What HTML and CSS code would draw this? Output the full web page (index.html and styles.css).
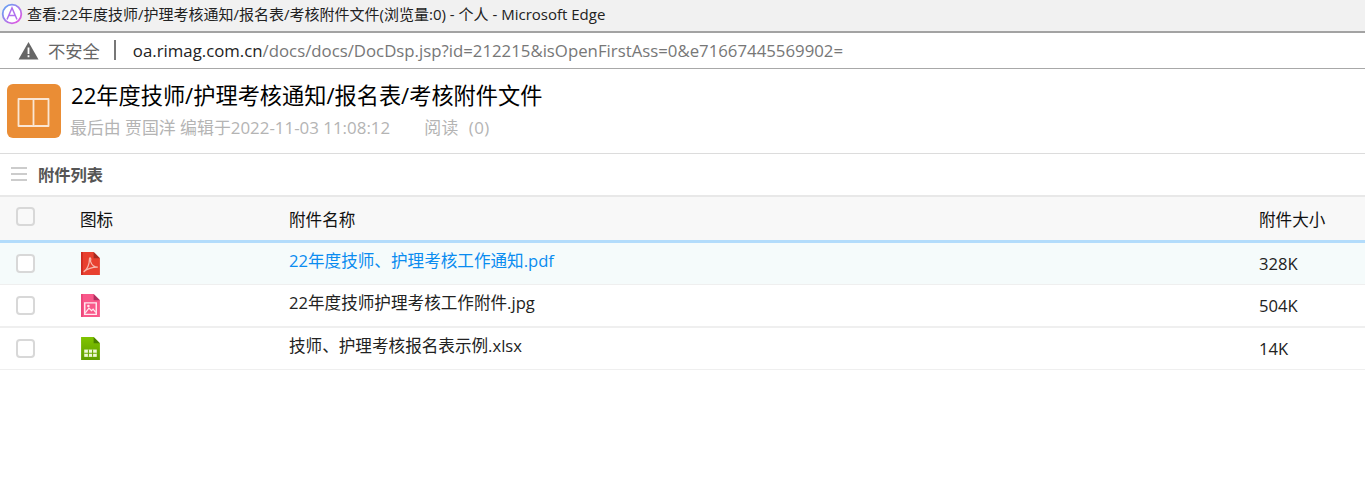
FILE: index.html
```html
<!DOCTYPE html>
<html lang="zh-CN">
<head>
<meta charset="utf-8">
<title>查看</title>
<link rel="stylesheet" href="styles.css">
</head>
<body>
<header class="titlebar">
  <svg class="edge-logo" width="22" height="22" viewBox="0 0 22 22"><defs><linearGradient id="lg" x1="0" y1="0" x2="1" y2="1"><stop offset="0" stop-color="#5aa8f5"/><stop offset="1" stop-color="#f050e0"/></linearGradient><linearGradient id="xg" x1="0" y1="0" x2="0" y2="1"><stop offset="0" stop-color="#80c400"/><stop offset="1" stop-color="#5f9e00"/></linearGradient></defs><circle cx="11" cy="11" r="9.300" fill="#fff" stroke="url(#lg)" stroke-width="1.800"/><path d="M6 16.500 11 5l5 11.500M7.700 12.500h6.600" fill="none" stroke="#b070ee" stroke-width="1.500"/></svg>
  <span class="window-title">查看:22年度技师/护理考核通知/报名表/考核附件文件(浏览量:0) - 个人 - Microsoft Edge</span>
</header>
<div class="addressbar">
  <svg class="warn" width="21" height="19" viewBox="0 0 21 19"><path d="M10.500 1 20.500 18.500H.5Z" fill="#666"/><path d="M9.600 6.500h1.800v6.500H9.600zM9.600 14.300h1.800v1.900H9.600z" fill="#fff"/></svg>
  <span class="insecure">不安全</span>
  <span class="sep"></span>
  <span class="url"><span class="host">oa.rimag.com.cn</span>/docs/docs/DocDsp.jsp?id=212215&amp;isOpenFirstAss=0&amp;e71667445569902=</span>
</div>
<section class="dochead">
  <div class="docicon">
    <svg width="34" height="32" viewBox="0 0 34 32"><path d="M1.500 4h30v27H18l-1.500 1-1.500-1H1.500ZM16.500 4v27" fill="none" stroke="#fbe6d3" stroke-width="1.800" stroke-linejoin="round"/></svg>
  </div>
  <div class="docinfo">
    <h1 class="doctitle">22年度技师/护理考核通知/报名表/考核附件文件</h1>
    <p class="docmeta"><span>最后由 贾国洋 编辑于2022-11-03 11:08:12</span><span class="reads">阅读&nbsp;&nbsp;(0)</span></p>
  </div>
</section>
<div class="sectionhead">
  <span class="menu"><i></i><i></i><i></i></span>
  <strong>附件列表</strong>
</div>
<div class="table">
  <div class="row thead">
    <span class="box boxhead"></span><span>图标</span><span>附件名称</span><span>附件大小</span>
  </div>
  <div class="row active">
    <span class="box"></span>
    <svg class="ficon" width="19" height="23" viewBox="1 1 18 22"><path d="M1 1h12l6 6v16H1Z" fill="#e8402f"/><path d="M1 1h1.500v22H1Z" fill="#c8281f"/><path d="M13 1l6 6h-6Z" fill="#a52a22"/><path d="M3.500 20c3.500-2 5.500-7.500 5.500-12 0-2.500 2-1.500 1 2 1 3 3.500 5.500 7 5.500-4 0-8.500 0-13.500 4.500Z" fill="none" stroke="#f6b8ae" stroke-width="1.200"/></svg>
    <span class="name link">22年度技师、护理考核工作通知.pdf</span><span class="size">328K</span>
  </div>
  <div class="row row-tall">
    <span class="box"></span>
    <svg class="ficon" width="19" height="23" viewBox="1 1 18 22"><path d="M1 1h12l6 6v16H1Z" fill="#f9588a"/><path d="M1 1h1.500v22H1Z" fill="#e84478"/><path d="M13 1l6 6h-6Z" fill="#b03060"/><path d="M4.500 9.500h11v11h-11Z" fill="none" stroke="#ffe8ef" stroke-width="1.400"/><path d="M5 19l3.500-4.500 2.500 2.500 1.500-1.500 2.500 3" fill="none" stroke="#ffe8ef" stroke-width="1.200"/><circle cx="8" cy="12.500" r="1.200" fill="#ffe8ef"/></svg>
    <span class="name">22年度技师护理考核工作附件.jpg</span><span class="size">504K</span>
  </div>
  <div class="row">
    <span class="box"></span>
    <svg class="ficon" width="19" height="23" viewBox="1 1 18 22"><path d="M1 1h12l6 6v16H1Z" fill="url(#xg)"/><path d="M13 1l6 6h-6Z" fill="#4a8000"/><path d="M4 13h12v7H4Z" fill="#eef8d8"/><path d="M8 13v7M12 13v7M4 16.500h12" stroke="#6aa800"/></svg>
    <span class="name">技师、护理考核报名表示例.xlsx</span><span class="size">14K</span>
  </div>
</div>
</body>
</html>
```
FILE: styles.css
```css
* { box-sizing: border-box; }
html, body { margin: 0; padding: 0; }
body {
  background: #fff;
  font-family: "Open Sans", "Noto Sans CJK SC", sans-serif;
  color: #111;
  height: 483px;
  overflow: hidden;
}
.titlebar {
  height: 33px;
  background: #f1f1f1;
  border-bottom: 2px solid #a3a3a3;
  display: flex;
  align-items: center;
  padding-left: 1px;
  gap: 4px;
}
.edge-logo { flex: none; margin-bottom: 4px; }
.window-title { font-size: 15px; color: #222; margin-bottom: 5px; white-space: nowrap; }
.addressbar {
  height: 36px;
  border-bottom: 1px solid #a8a8a8;
  display: flex;
  align-items: center;
  padding-left: 18px;
  font-size: 16.800px;
  padding-bottom: 1px;
}
.insecure { color: #666; margin-left: 9px; font-size: 17.300px; }
.sep { width: 2px; height: 20px; background: #777; margin: 0 17px 0 14px; }
.url { color: #777; white-space: nowrap; }
.host { color: #222; }
.dochead {
  height: 85px;
  border-bottom: 1px solid #dcdcdc;
  display: flex;
  padding: 15px 0 0 7px;
  gap: 10px;
}
.docicon {
  width: 54px;
  height: 54px;
  background: #ea8d35;
  border-radius: 6px;
  display: flex;
  align-items: center;
  justify-content: center;
}
.docinfo { display: flex; flex-direction: column; margin-top: -1px; }
.doctitle { margin: 0; font-size: 22.200px; font-weight: 400; line-height: 26px; color: #000; white-space: nowrap; }
.docmeta { margin: 9px 0 0; font-size: 16.900px; line-height: 20px; color: #b4b4b4; white-space: nowrap; margin-left: -1px; }
.reads { margin-left: 34px; letter-spacing: 0.500px; }
.sectionhead {
  height: 43px;
  border-bottom: 2px solid #e8e8e8;
  display: flex;
  align-items: center;
  padding-left: 11px;
  gap: 11px;
  font-size: 16.300px;
  color: #555;
  padding-bottom: 2px;
}
.sectionhead strong { font-weight: 700; }
.menu { display: flex; flex-direction: column; gap: 4px; width: 16px; }
.menu i { display: block; height: 2px; background: #ccc; }
.row {
  display: grid;
  grid-template-columns: 80px 209px 970px 1fr;
  align-items: center;
  height: 42px;
  border-bottom: 1px solid #efefef;
  font-size: 16.600px;
  color: #222;
}
.row-tall { height: 43px; border-bottom-width: 2px; }
.thead {
  height: 46px;
  background: #f8f8f8;
  border-bottom: 3px solid #b3dcfb;
  color: #111;
}
.active { background: #f5fbfb; }
.box {
  width: 19px;
  height: 19px;
  margin-left: 16px;
  margin-bottom: 1px;
  border: 2px solid #d8d8d8;
  border-radius: 4px;
  background: #fff;
}
.boxhead { margin-bottom: 5px; background: #f9f9f9; }
.ficon { display: block; margin-left: 1px; }
.name { margin-bottom: 8px; }
.link { color: #0a8cf0; }
```
